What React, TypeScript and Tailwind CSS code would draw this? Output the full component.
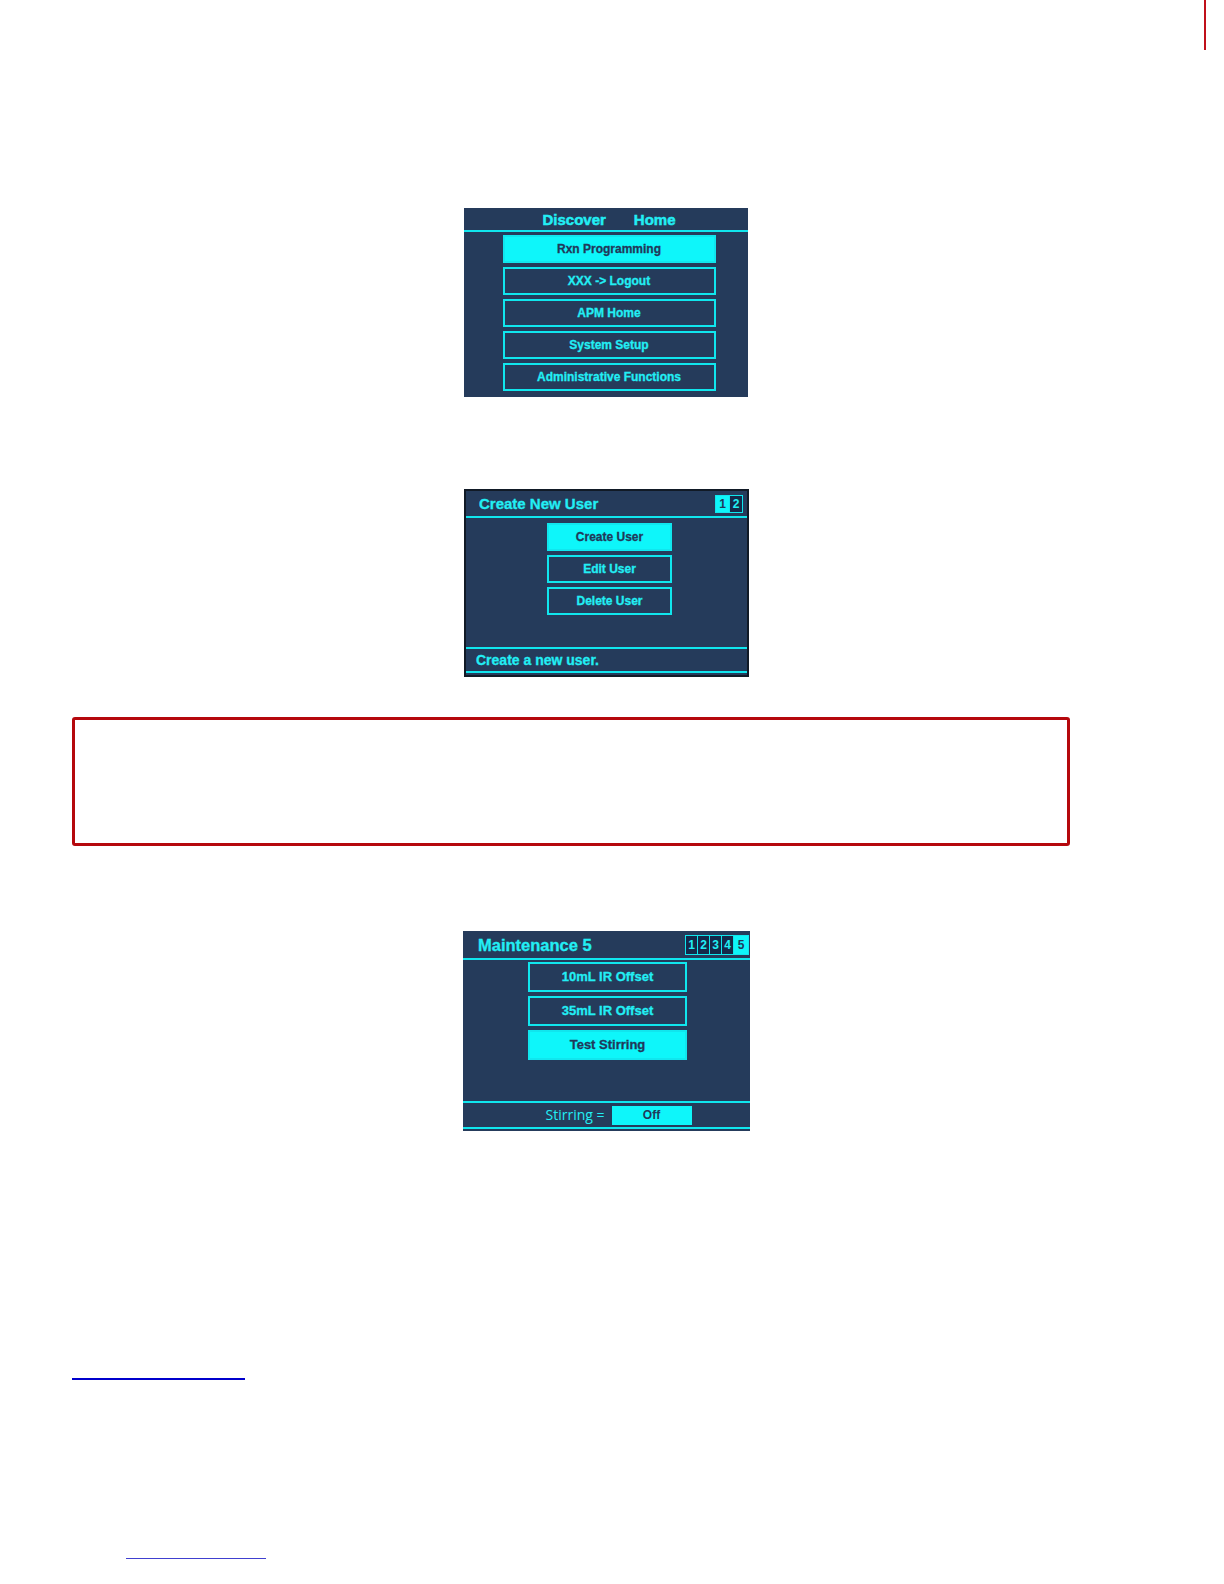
import React from "react";

const font = { fontFamily: '"Liberation Sans", Arial, sans-serif' };

function Btn({ label, filled, w, h = "h-[28px]", text = "text-[12px]" }: { label: string; filled?: boolean; w: string; h?: string; text?: string }) {
  return (
    <div
      className={`${w} ${h} ${text} flex items-center justify-center font-bold [-webkit-text-stroke:0.3px_currentColor] border-2 border-[#10e6ee] ${
        filled ? "bg-[#0ef6fa] text-[#20395a]" : "bg-transparent text-[#22eef4]"
      }`}
    >
      {label}
    </div>
  );
}

export default function App() {
  return (
    <div className="relative w-[1224px] h-[1584px] bg-white" style={font}>
      <div className="absolute left-[1204px] top-0 w-[2px] h-[50px] bg-[#c0101a]" />
      <div className="flex flex-col pt-[208px]">
        {/* Panel 1 */}
        <div className="ml-[464px] w-[284px] h-[189px] bg-[#253b5b] flex flex-col">
          <div className="h-[22px] flex items-end justify-center gap-[28px] text-[15px] font-bold [-webkit-text-stroke:0.5px_currentColor] text-[#22eef4] leading-none pb-[3px] pl-[6px]">
            <span>Discover</span>
            <span>Home</span>
          </div>
          <div className="h-[2px] bg-[#10e6ee]" />
          <div className="flex flex-col items-center gap-[4px] pt-[3px] pl-[6px]">
            <Btn label="Rxn Programming" filled w="w-[213px]" h="h-[28px]" />
            <Btn label="XXX -> Logout" w="w-[213px]" h="h-[28px]" />
            <Btn label="APM Home" w="w-[213px]" h="h-[28px]" />
            <Btn label="System Setup" w="w-[213px]" h="h-[28px]" />
            <Btn label="Administrative Functions" w="w-[213px]" h="h-[28px]" />
          </div>
        </div>

        {/* Panel 2 */}
        <div className="ml-[464px] mt-[92px] w-[285px] h-[188px] bg-[#253b5b] border-2 border-[#111a26] flex flex-col">
          <div className="h-[25px] flex items-center justify-between pl-[13px] pr-[4px]">
            <span className="text-[15px] font-bold [-webkit-text-stroke:0.3px_currentColor] text-[#22eef4] leading-none">Create New User</span>
            <div className="flex h-[18px] border border-[#10e6ee] text-[12px] font-bold leading-none">
              <span className="w-[13px] flex items-center justify-center bg-[#0ef6fa] text-[#20395a]">1</span>
              <span className="w-[13px] flex items-center justify-center bg-[#14294a] text-[#22eef4] border-l border-[#10e6ee]">2</span>
            </div>
          </div>
          <div className="h-[2px] bg-[#10e6ee]" />
          <div className="flex flex-col items-center gap-[4px] pt-[5px] pl-[6px]">
            <Btn label="Create User" filled w="w-[125px]" h="h-[28px]" />
            <Btn label="Edit User" w="w-[125px]" h="h-[28px]" />
            <Btn label="Delete User" w="w-[125px]" h="h-[28px]" />
          </div>
          <div className="flex-1" />
          <div className="h-[2px] bg-[#10e6ee]" />
          <div className="h-[22px] flex items-center pl-[10px] text-[14px] font-bold [-webkit-text-stroke:0.3px_currentColor] text-[#22eef4] leading-none">
            Create a new user.
          </div>
          <div className="h-[2px] bg-[#10e6ee] mb-[2px]" />
        </div>

        {/* Red box */}
        <div className="ml-[72px] mt-[40px] w-[998px] h-[129px] border-[3px] border-[#b5080d] rounded-[3px]" />

        {/* Panel 3 */}
        <div className="ml-[463px] mt-[85px] w-[287px] h-[200px] bg-[#253b5b] flex flex-col">
          <div className="h-[27px] flex items-center justify-between pl-[15px] pr-[1px]">
            <span className="text-[16.5px] font-bold [-webkit-text-stroke:0.3px_currentColor] text-[#22eef4] leading-none pt-[2px]">Maintenance 5</span>
            <div className="flex h-[20px] border border-[#10e6ee] text-[12px] font-bold leading-none">
              {["1", "2", "3", "4"].map((n) => (
                <span key={n} className="w-[12px] flex items-center justify-center bg-[#14294a] text-[#22eef4] border-r border-[#10e6ee]">
                  {n}
                </span>
              ))}
              <span className="w-[14px] flex items-center justify-center bg-[#0ef6fa] text-[#20395a]">5</span>
            </div>
          </div>
          <div className="h-[2px] bg-[#10e6ee]" />
          <div className="flex flex-col items-center gap-[4px] pt-[2px] pl-[2px]">
            <Btn label="10mL IR Offset" w="w-[159px]" h="h-[30px]" text="text-[13px]" />
            <Btn label="35mL IR Offset" w="w-[159px]" h="h-[30px]" text="text-[13px]" />
            <Btn label="Test Stirring" filled w="w-[159px]" h="h-[30px]" text="text-[13px]" />
          </div>
          <div className="flex-1" />
          <div className="h-[2px] bg-[#10e6ee]" />
          <div className="h-[24px] flex items-center justify-center gap-[7px] pl-[24px]">
            <span className="text-[14px] text-[#22eef4] leading-none" style={{ fontFamily: '"Open Sans", "Liberation Sans", sans-serif' }}>
              Stirring =
            </span>
            <span className="w-[80px] h-[19px] bg-[#0ef6fa] text-[#20395a] text-[12px] font-bold flex items-center justify-center">Off</span>
          </div>
          <div className="h-[2px] bg-[#10e6ee] mb-[2px]" />
        </div>

        {/* Links */}
        <a className="ml-[72px] mt-[247px] w-[173px] h-[2px] bg-[#0000cc] block" href="#" aria-label="link" />
        <a className="ml-[126px] mt-[178px] w-[140px] h-[1px] bg-[#4040d0] block" href="#" aria-label="link" />
      </div>
    </div>
  );
}
